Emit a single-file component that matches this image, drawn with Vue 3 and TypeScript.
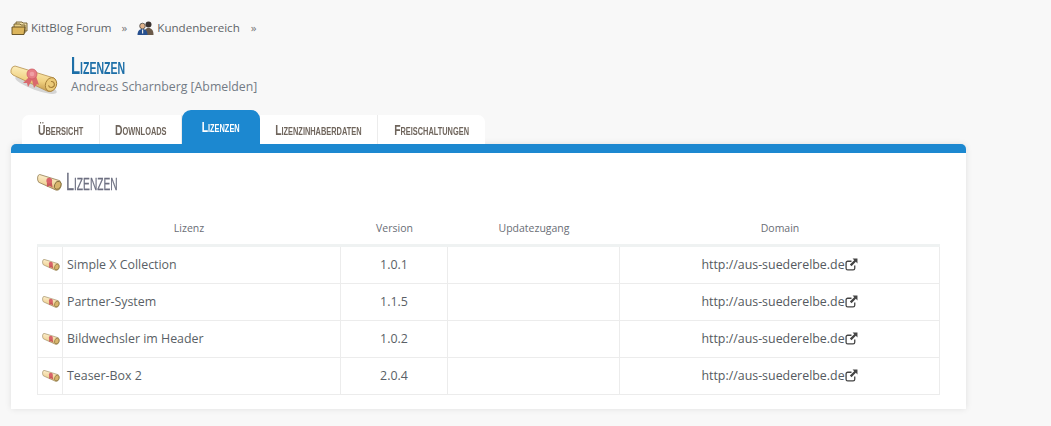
<script setup lang="ts">
interface Licence { name: string; version: string }
const tabs: { label: string; active?: boolean }[] = [
  { label: 'Übersicht' },
  { label: 'Downloads' },
  { label: 'Lizenzen', active: true },
  { label: 'Lizenzinhaberdaten' },
  { label: 'Freischaltungen' },
]
const rows: Licence[] = [
  { name: 'Simple X Collection', version: '1.0.1' },
  { name: 'Partner-System', version: '1.1.5' },
  { name: 'Bildwechsler im Header', version: '1.0.2' },
  { name: 'Teaser-Box 2', version: '2.0.4' },
]
</script>

<template>
  <svg class="noise" width="1051" height="426" aria-hidden="true">
    <defs>
      <filter id="grain" x="0" y="0" width="100%" height="100%">
        <feTurbulence type="fractalNoise" baseFrequency="0.8" numOctaves="2" seed="4" />
        <feColorMatrix type="matrix" values="0 0 0 0 .55  0 0 0 0 .55  0 0 0 0 .55  .3 .3 0 0 -.22" />
      </filter>
      <linearGradient id="paper" x1="0.35" y1="0" x2="0.2" y2="1">
        <stop offset="0" stop-color="#fdf0c0" />
        <stop offset="0.55" stop-color="#f0d080" />
        <stop offset="1" stop-color="#b98c3e" />
      </linearGradient>
      <linearGradient id="paperSmall" x1="0.35" y1="0" x2="0.2" y2="1">
        <stop offset="0" stop-color="#fdf0cf" />
        <stop offset="0.6" stop-color="#f0d49a" />
        <stop offset="1" stop-color="#bd9a58" />
      </linearGradient>
      <symbol id="scroll" viewBox="0 0 48 33">
        <ellipse cx="26" cy="23" rx="22" ry="5" transform="rotate(20 26 23)" fill="#000" opacity=".14" />
        <path d="M5 4 L44 16 Q47 19 45 25 Q42 31 37 29 L3 13 Q0 11 1 8 Q2 4 5 4 Z" fill="url(#paper)" stroke="#b48f4c" stroke-width=".8" />
        <ellipse cx="41" cy="22.500" rx="5.500" ry="7" transform="rotate(20 41 22.500)" fill="#eccb79" stroke="#a67f39" stroke-width=".9" />
        <path d="M41 19.500a3 3 0 1 1-2.500 3.800" fill="none" stroke="#a67f39" stroke-width="1.100" />
        <path d="M20 14 L13 21 L17 21 L18 25 L22 18 L24 26 L27 22 L29 23 L26 14 Z" fill="#d9696d" />
        <circle cx="22" cy="12" r="5" fill="#e67f86" stroke="#cf5d64" stroke-width=".8" />
        <circle cx="22" cy="12" r="2.300" fill="#f0a0a4" />
      </symbol>
      <symbol id="scroll-small" viewBox="0 0 48 33">
        <path d="M5 1 L44 13 Q48 18 46 25 Q43 33 36 31 L3 16 Q0 12 1 6 Q2 1 5 1 Z" fill="url(#paperSmall)" stroke="#948055" stroke-width="1.600" />
        <ellipse cx="40" cy="22" rx="6" ry="8" transform="rotate(20 40 22)" fill="#d8b56c" stroke="#7d6a3a" stroke-width="1.600" />
        <path d="M19 12 L28 14 L30 26 L24 23 L19 25 Z" fill="#c9585c" />
        <circle cx="23.500" cy="13" r="5.500" fill="#d8636a" />
      </symbol>
    </defs>
    <rect width="1051" height="426" filter="url(#grain)" />
  </svg>

  <div class="page">
    <nav class="crumbs">
      <svg class="crumb-icon" viewBox="0 0 17 14" aria-hidden="true">
        <path d="M5 1h6l1 1h4v8H5z" fill="#f0dfa8" stroke="#6d5a2a" stroke-width=".9" />
        <path d="M3 3h6l1 1h4v8H3z" fill="#e8cf88" stroke="#6d5a2a" stroke-width=".9" />
        <path d="M1 6h13l-1 7.500H1z" fill="#dcb55c" stroke="#5d4a1d" stroke-width=".9" />
      </svg>
      <a class="crumb">KittBlog Forum</a>
      <span class="sep">»</span>
      <svg class="crumb-icon" viewBox="0 0 17 14" aria-hidden="true">
        <circle cx="11.500" cy="3.500" r="3" fill="#3a3230" />
        <path d="M7 14c0-5 1.500-7 4.500-7S16.500 9 16.500 14z" fill="#6b5a4a" />
        <circle cx="5.500" cy="5" r="2.800" fill="#e2b48c" stroke="#333" stroke-width=".7" />
        <path d="M.5 14c0-4 2-6 5-6s5 2 5 6z" fill="#27508f" />
        <path d="M5 8.500h1.200v4H5z" fill="#e8e8e8" />
      </svg>
      <a class="crumb">Kundenbereich</a>
      <span class="sep last">»</span>
    </nav>

    <header class="head">
      <svg class="head-icon"><use href="#scroll" /></svg>
      <div class="head-text">
        <h1 class="title"><span>Lizenzen</span></h1>
        <p class="user">Andreas Scharnberg [Abmelden]</p>
      </div>
    </header>

    <ul class="tabs">
      <li v-for="t in tabs" :key="t.label" class="tab" :class="{ active: t.active }"><span>{{ t.label }}</span></li>
    </ul>

    <main class="panel">
      <h2 class="section"><svg class="section-icon"><use href="#scroll-small" /></svg><span>Lizenzen</span></h2>
      <table class="grid">
        <colgroup>
          <col class="c1" /><col class="c2" /><col class="c3" /><col class="c4" /><col class="c5" />
        </colgroup>
        <thead>
          <tr>
            <th colspan="2">Lizenz</th>
            <th>Version</th>
            <th>Updatezugang</th>
            <th>Domain</th>
          </tr>
        </thead>
        <tbody>
          <tr v-for="r in rows" :key="r.name">
            <td class="ic"><svg class="row-icon"><use href="#scroll-small" /></svg></td>
            <td class="name">{{ r.name }}</td>
            <td class="mid">{{ r.version }}</td>
            <td></td>
            <td class="mid">
              <a class="link">http://aus-suederelbe.de<svg class="ext" viewBox="0 0 12 12" aria-hidden="true">
                <path d="M9 7v2.500A1.500 1.500 0 0 1 7.500 11h-5A1.500 1.500 0 0 1 1 9.500v-5A1.500 1.500 0 0 1 2.500 3H6" fill="none" stroke="#444" stroke-width="1.200" />
                <path d="M7 .5h4.500V5L10 3.500 6 7.500 4.500 6l4-4z" fill="#444" />
              </svg></a>
            </td>
          </tr>
        </tbody>
      </table>
    </main>
  </div>
</template>

<style>
html, body { margin: 0; background: #f8f8f8; }
</style>

<style scoped>
.noise { position: absolute; left: 0; top: 0; z-index: -1; }
.page {
  height: 426px;
  box-sizing: border-box;
  overflow: hidden;
  padding: 20px 85px 0 11px;
  font-family: "Open Sans", "Noto Sans", sans-serif;
  color: #666;
}
.crumbs { display: flex; align-items: center; height: 15px; font-size: 11.600px; }
.crumb-icon { width: 17px; height: 14px; margin-right: 3px; }
.crumb { color: #5f6468; }
.sep { margin: 0 10px; color: #777; }
.sep.last { margin-left: 11px; }
.head { display: flex; margin-top: 19px; height: 41px; }
.head-icon { width: 48px; height: 33px; margin: 8px 13px 0 -1px; }
.head-text { display: flex; flex-direction: column; }
.title {
  margin: 0;
  height: 24px;
  font: 700 24px/24px "Liberation Sans", sans-serif;
  font-variant: small-caps;
  color: #1d6fa8;
}
.title span { display: inline-block; transform: scaleX(.62); transform-origin: 0 50%; }
.user { margin: 0; font-size: 12.300px; line-height: 17px; color: #737b85; }
.tabs {
  display: flex;
  align-items: flex-end;
  list-style: none;
  margin: 15px 0 0;
  padding: 0 0 0 11px;
  height: 34px;
}
.tab {
  height: 29px;
  box-sizing: border-box;
  display: flex;
  align-items: center;
  justify-content: center;
  background: #fff;
  border-right: 1px solid #ececec;
  font: 700 14px "Liberation Sans", sans-serif;
  font-variant: small-caps;
  color: #6f655c;
  white-space: nowrap;
}
.tab span { display: inline-block; transform: scaleX(.74); }
.tab:first-child { border-radius: 7px 0 0 0; width: 78px; }
.tab:nth-child(2) { width: 82px; }
.tab.active {
  width: 78px;
  height: 34px;
  background: #1c88d0;
  color: #fff;
  border: 0;
  border-radius: 9px 9px 0 0;
  padding-bottom: 1px;
}
.tab:nth-child(4) { width: 118px; }
.tab:nth-child(5) { width: 107px; border-right: 0; border-radius: 0 7px 0 0; }
.panel {
  width: 955px;
  height: 265px;
  box-sizing: border-box;
  background: #fff;
  border-top: 9px solid #1c88d0;
  border-radius: 5px 5px 0 0;
  box-shadow: 0 0 6px rgba(0, 0, 0, .1);
  padding: 18px 26px 0;
}
.section {
  display: flex;
  align-items: center;
  margin: 0;
  height: 22px;
  font: 400 24px "Liberation Sans", sans-serif;
  font-variant: small-caps;
  color: #6c6f80;
}
.section span { display: inline-block; transform: scaleX(.6); transform-origin: 0 50%; -webkit-text-stroke: .3px #6c6f80; }
.section-icon { width: 25px; height: 17px; margin-right: 4px; }
.grid {
  border-collapse: separate;
  border-spacing: 0;
  table-layout: fixed;
  width: 903px;
  margin-top: 21px;
  font-size: 12.400px;
  color: #5a5f66;
}
.c1 { width: 26px; }
.c2 { width: 278px; }
.c3 { width: 107px; }
.c4 { width: 172px; }
.c5 { width: 320px; }
th {
  height: 27px;
  padding: 0 0 3px;
  font-size: 10.500px;
  font-weight: 400;
  color: #6a6e76;
  border-bottom: 3px solid #eff2f2;
}
td {
  height: 35px;
  padding: 0 0 1px;
  border-bottom: 1px solid #ececec;
  border-right: 1px solid #ececec;
}
td:first-child { border-left: 1px solid #ececec; }
.ic { text-align: center; line-height: 0; }
.row-icon { width: 18px; height: 12px; vertical-align: -5px; margin-left: 1px; }
.name { padding-left: 4px; }
.mid { text-align: center; }
.link { color: #555a60; }
.ext { width: 13px; height: 13px; vertical-align: -2px; margin-left: 0; }
</style>
